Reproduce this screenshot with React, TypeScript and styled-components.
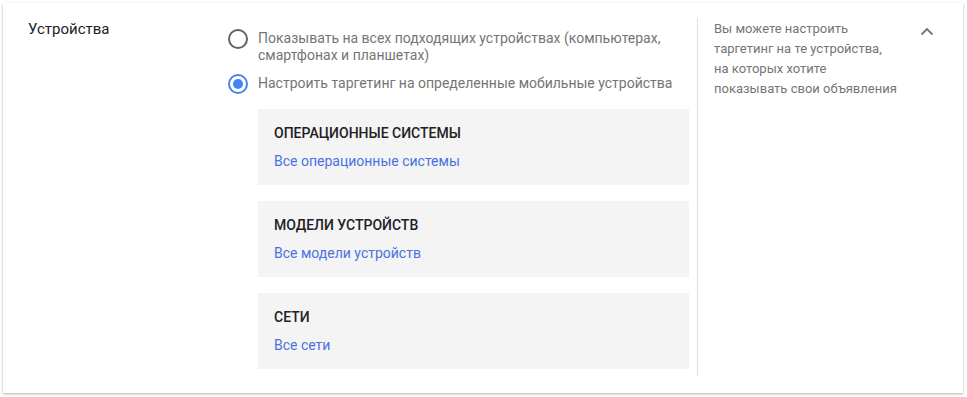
import React, { useState } from 'react';
import styled, { createGlobalStyle } from 'styled-components';

const GlobalStyle = createGlobalStyle`
  html, body {
    margin: 0;
    padding: 0;
    background: #ffffff;
  }
  body {
    font-family: Roboto, "Noto Sans", "Liberation Sans", sans-serif;
    -webkit-font-smoothing: antialiased;
  }
`;

const Page = styled.div`
  padding: 3px 4px 4px 3px;
`;

const Card = styled.section`
  display: grid;
  grid-template-columns: 200px 469px 1fr;
  height: 390px;
  box-sizing: border-box;
  padding: 15px 24px 17px 25px;
  background: #ffffff;
  box-shadow: 0 1px 2px rgba(60, 64, 67, 0.3), 0 1px 4px rgba(60, 64, 67, 0.12);
`;

const Label = styled.div`
  font-size: 15px;
  line-height: 22px;
  color: #202124;
`;

const Main = styled.div`
  display: flex;
  flex-direction: column;
  padding: 12px 8px 0 0;
`;

const Options = styled.div`
  display: flex;
  flex-direction: column;
  gap: 11px;
`;

const Option = styled.label`
  display: flex;
  align-items: flex-start;
  gap: 10px;
  cursor: pointer;
`;

const RadioCircle = styled.span<{ $checked: boolean }>`
  flex: none;
  width: 20px;
  height: 20px;
  margin-top: -1px;
  box-sizing: border-box;
  border-radius: 50%;
  border: 2px solid ${(p) => (p.$checked ? '#4285f4' : '#5f6368')};
  display: flex;
  align-items: center;
  justify-content: center;

  &::after {
    content: '';
    width: 10px;
    height: 10px;
    border-radius: 50%;
    background: #4285f4;
    display: ${(p) => (p.$checked ? 'block' : 'none')};
  }
`;

const OptionText = styled.span`
  font-size: 14px;
  line-height: 17px;
  color: #757575;
`;

const Panels = styled.div`
  display: flex;
  flex-direction: column;
  gap: 16px;
  margin: 15px 0 0 30px;
`;

const Panel = styled.div`
  background: #f4f4f4;
  padding: 14px 16px;
  display: flex;
  flex-direction: column;
  gap: 8px;
`;

const PanelTitle = styled.div`
  font-size: 14px;
  line-height: 20px;
  font-weight: 500;
  color: #202124;
  text-transform: uppercase;
`;

const PanelLink = styled.a`
  font-size: 14px;
  line-height: 20px;
  color: #4a72e0;
  text-decoration: none;
  cursor: pointer;
`;

const Aside = styled.aside`
  border-left: 1px solid #e0e0e0;
  display: flex;
  justify-content: space-between;
  align-items: flex-start;
  padding-left: 16px;
`;

const HelpText = styled.p`
  margin: 0;
  padding-top: 1px;
  font-size: 13px;
  line-height: 20px;
  color: #757575;
  white-space: nowrap;
`;

const Collapse = styled.button`
  width: 24px;
  height: 24px;
  margin-top: 1px;
  padding: 0;
  border: none;
  background: none;
  display: flex;
  align-items: center;
  justify-content: center;
  color: #757575;
  cursor: pointer;
`;

const panels = [
  { title: 'Операционные системы', link: 'Все операционные системы' },
  { title: 'Модели устройств', link: 'Все модели устройств' },
  { title: 'Сети', link: 'Все сети' },
];

export default function App() {
  const [mode, setMode] = useState<'all' | 'mobile'>('mobile');

  return (
    <Page>
      <GlobalStyle />
      <Card>
        <Label>Устройства</Label>
        <Main>
          <Options>
            <Option onClick={() => setMode('all')}>
              <RadioCircle $checked={mode === 'all'} />
              <OptionText>
                Показывать на всех подходящих устройствах (компьютерах, смартфонах и планшетах)
              </OptionText>
            </Option>
            <Option onClick={() => setMode('mobile')}>
              <RadioCircle $checked={mode === 'mobile'} />
              <OptionText>Настроить таргетинг на определенные мобильные устройства</OptionText>
            </Option>
          </Options>
          {mode === 'mobile' && (
            <Panels>
              {panels.map((p) => (
                <Panel key={p.title}>
                  <PanelTitle>{p.title}</PanelTitle>
                  <PanelLink>{p.link}</PanelLink>
                </Panel>
              ))}
            </Panels>
          )}
        </Main>
        <Aside>
          <HelpText>
            Вы можете настроить
            <br />
            таргетинг на те устройства,
            <br />
            на которых хотите
            <br />
            показывать свои объявления
          </HelpText>
          <Collapse aria-label="Свернуть">
            <svg width="14" height="9" viewBox="0 0 14 9" fill="none">
              <path d="M1.5 7.5L7 2l5.5 5.5" stroke="currentColor" strokeWidth="1.8" />
            </svg>
          </Collapse>
        </Aside>
      </Card>
    </Page>
  );
}
